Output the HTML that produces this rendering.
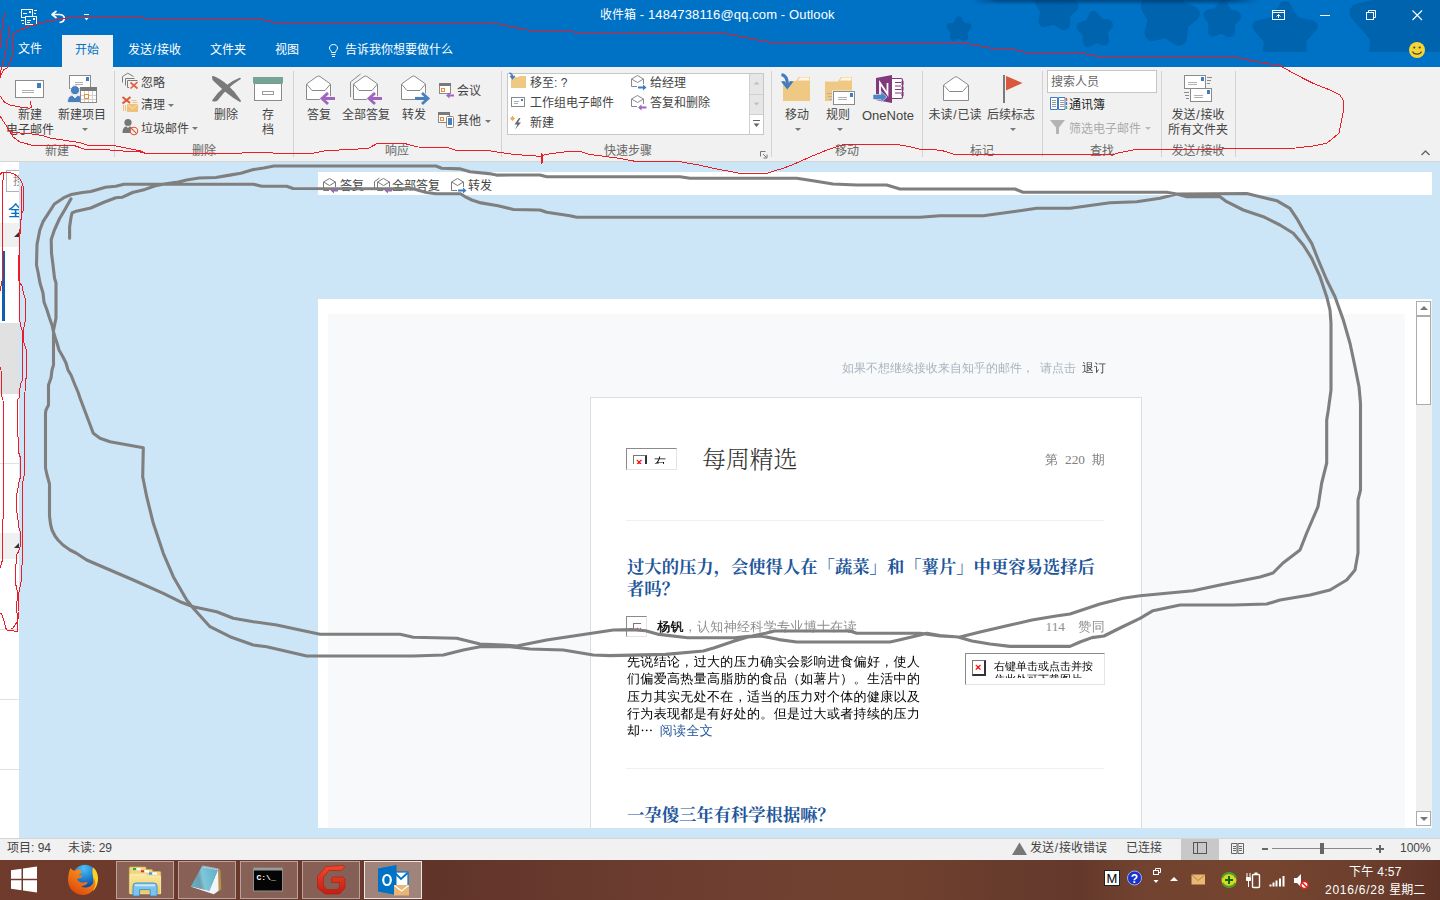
<!DOCTYPE html>
<html lang="zh-CN">
<head>
<meta charset="utf-8">
<title>收件箱 - 1484738116@qq.com - Outlook</title>
<style>
*{box-sizing:border-box;margin:0;padding:0}
html,body{width:1440px;height:900px;overflow:hidden;background:#cde6f7}
body{position:relative;font-family:"Liberation Sans","Noto Sans CJK SC",sans-serif;font-size:12px;color:#444;line-height:1}
.abs,.abs>*{position:absolute}
#titlebar{position:absolute;left:0;top:0;width:1440px;height:67px;background:#0072c6;overflow:hidden}
#ribbon{position:absolute;left:0;top:67px;width:1440px;height:95px;background:#f1f1f1;border-bottom:1px solid #d4d4d4}
#leftcol{position:absolute;left:0;top:162px;width:19px;height:676px;background:#fff;overflow:hidden}
#rphead{position:absolute;left:318px;top:172px;width:1114px;height:23px;background:#fff;overflow:hidden}
#msg{position:absolute;left:318px;top:299px;width:1114px;height:529px;background:#fff;overflow:hidden}
#status{position:absolute;left:0;top:838px;width:1440px;height:22px;background:#f1f1f1;border-top:1px solid #d4d4d4}
#taskbar{position:absolute;left:0;top:860px;width:1440px;height:40px;background:linear-gradient(90deg,#6e3b2d 0%,#6d3a2c 8%,#66372b 29%,#61342a 30%,#683a2e 40%,#6f4031 52%,#71412f 62%,#683c2d 69%,#64392c 75%,#71422f 79%,#75452f 88%,#6c3e2d 95%,#5e3327 100%);overflow:hidden}
#ink,#icons{position:absolute;left:0;top:0;width:1440px;height:900px;pointer-events:none}
.t{position:absolute;white-space:nowrap}
.sx{letter-spacing:0;padding:0 .8px}
#titlebar .tab{position:absolute;top:42px;font-size:12px;color:#fff;white-space:nowrap;line-height:16px}
#tabsel{position:absolute;left:62px;top:35px;width:51px;height:32px;background:#f1f1f1}
#ribbon .sep{position:absolute;top:4px;width:1px;height:86px;background:#d2d2d2}
#ribbon .gl{position:absolute;top:76px;font-size:12px;color:#666;white-space:nowrap;line-height:16px;transform:translateX(-50%)}
#ribbon .bl{position:absolute;font-size:12px;color:#444;white-space:nowrap;line-height:15px;text-align:center;transform:translateX(-50%)}
#ribbon .sl{position:absolute;font-size:12px;color:#444;white-space:nowrap;line-height:16px}
#ribbon .arr{position:absolute;width:0;height:0;border-left:3px solid transparent;border-right:3px solid transparent;border-top:3px solid #777}

#msg .em{position:absolute;white-space:nowrap;font-family:"Liberation Serif","Noto Serif CJK SC",serif}


#msg .bm{font-family:"Liberation Serif","WenQuanYi Zen Hei","Noto Serif CJK SC",serif}
#msg .bm13{font-size:13px !important;letter-spacing:.33px}
#msg .bm13 .n{font-size:13.33px;letter-spacing:0}
#msg .ph{position:absolute;border:1px solid #e4e4e4;border-top-color:#8a8a8a;border-left-color:#8a8a8a;background:#fff;overflow:hidden}
#msg .phc{position:absolute;overflow:hidden}
#msg .phi{position:absolute;width:14px;height:16px;border:1px solid #f0f0f0;border-top:1px solid #777;border-left:1px solid #777;border-right:2px solid #333;border-bottom:2px solid #333;background:#fff;font-family:"Liberation Sans",sans-serif}
#msg .phi span{position:absolute;left:2px;top:0px;font-size:11px;font-weight:bold;color:#f00;line-height:13px}
#status .st{position:absolute;top:1px;font-size:12px;color:#444;white-space:nowrap;line-height:16px}
#taskbar .tb{position:absolute;top:1px;width:58px;height:38px;background:rgba(255,255,255,.2);border:1px solid rgba(255,255,255,.42)}
#taskbar svg,#status svg,#rphead svg,#msg svg,#leftcol svg{position:absolute;overflow:visible}
#titlebar svg{position:absolute;overflow:hidden}

</style>
</head>
<body>
<div id="titlebar">
<svg id="stars" style="left:0;top:0" width="1440" height="52" viewBox="0 0 1440 52"><defs><linearGradient id="shd" x1="0" y1="0" x2="0" y2="1"><stop offset="0" stop-color="#003a6b" stop-opacity=".75"/><stop offset="1" stop-color="#003a6b" stop-opacity="0"/></linearGradient><linearGradient id="shm" x1="0" y1="0" x2="1" y2="0"><stop offset="0" stop-color="#fff" stop-opacity="0"/><stop offset=".1" stop-color="#fff"/><stop offset=".9" stop-color="#fff"/><stop offset="1" stop-color="#fff" stop-opacity="0"/></linearGradient><mask id="shmask"><rect x="970" y="0" width="290" height="6" fill="url(#shm)"/></mask></defs>
<g fill="#0063ad" stroke="#0063ad" stroke-linejoin="round">
<path d="M959.0 20.0 L962.1 25.2 L968.0 26.6 L964.1 31.1 L964.6 37.2 L959.0 34.8 L953.4 37.2 L953.9 31.1 L950.0 26.6 L955.9 25.2Z" stroke-width="7.0"/>
<path d="M1058.4 -7.8 L1062.6 2.2 L1072.7 6.0 L1064.6 13.2 L1064.0 24.0 L1054.7 18.4 L1044.2 21.2 L1046.6 10.7 L1040.7 1.5 L1051.5 0.6Z" stroke-width="12"/>
<path d="M1093.8 16.1 L1099.0 23.3 L1107.9 24.5 L1102.6 31.8 L1104.2 40.6 L1095.7 37.8 L1087.8 42.0 L1087.8 33.1 L1081.4 26.9 L1089.9 24.1Z" stroke-width="10"/>
<path d="M1173.0 -5.7 L1178.3 8.1 L1191.8 13.8 L1180.4 23.0 L1179.1 37.7 L1166.8 29.7 L1152.5 33.0 L1156.2 18.8 L1148.7 6.2 L1163.4 5.4Z" stroke-width="16"/>
<path d="M1222.7 6.0 L1226.9 13.9 L1235.5 16.4 L1229.3 22.8 L1229.6 31.7 L1221.6 27.8 L1213.2 30.9 L1214.4 22.0 L1208.9 15.0 L1217.7 13.4Z" stroke-width="11.0"/>
<path d="M1285.0 7.0 L1294.2 22.3 L1311.6 26.3 L1299.9 39.8 L1301.5 57.7 L1285.0 50.7 L1268.5 57.7 L1270.1 39.8 L1258.4 26.3 L1275.8 22.3Z" stroke-width="12"/>
<path d="M1406.0 -22.0 L1422.5 5.3 L1453.6 12.5 L1432.6 36.7 L1435.4 68.5 L1406.0 56.0 L1376.6 68.5 L1379.4 36.7 L1358.4 12.5 L1389.5 5.3Z" stroke-width="18"/>
</g>
<rect x="970" y="0" width="290" height="5" fill="url(#shd)" mask="url(#shmask)"/>
</svg>
<div id="tabsel"></div>
<div class="t" id="wtitle" style="left:600px;top:6px;font-size:13px;color:#fff;line-height:17px;letter-spacing:.12px"><span style="font-size:12px;letter-spacing:0">收件箱</span> - 1484738116@qq.com - Outlook</div>
<div class="tab" style="left:18px;top:41px">文件</div>
<div class="tab" style="left:75px;color:#0072c6">开始</div>
<div class="tab" style="left:128px">发送<span class="sx">/</span>接收</div>
<div class="tab" style="left:210px">文件夹</div>
<div class="tab" style="left:275px">视图</div>
<div class="tab" style="left:345px">告诉我你想要做什么</div>
</div>
<div id="ribbon">
<div class="sep" style="left:114px"></div>
<div class="sep" style="left:293px"></div>
<div class="sep" style="left:501px"></div>
<div class="sep" style="left:771px"></div>
<div class="sep" style="left:922px"></div>
<div class="sep" style="left:1042px"></div>
<div class="sep" style="left:1161px"></div>
<div class="sep" style="left:1235px"></div>
<div class="gl" style="left:57px">新建</div>
<div class="gl" style="left:204px">删除</div>
<div class="gl" style="left:397px">响应</div>
<div class="gl" style="left:628px">快速步骤</div>
<div class="gl" style="left:847px">移动</div>
<div class="gl" style="left:982px">标记</div>
<div class="gl" style="left:1102px">查找</div>
<div class="gl" style="left:1198px">发送<span class="sx">/</span>接收</div>

<div class="bl" style="left:30px;top:41px">新建<br>电子邮件</div>
<div class="bl" style="left:82px;top:41px">新建项目</div>
<div class="arr" style="left:82px;top:61px"></div>

<div class="sl" style="left:141px;top:8px">忽略</div>
<div class="sl" style="left:141px;top:30px">清理</div>
<div class="arr" style="left:168px;top:37px"></div>
<div class="sl" style="left:141px;top:54px">垃圾邮件</div>
<div class="arr" style="left:192px;top:60px"></div>
<div class="bl" style="left:226px;top:41px">删除</div>
<div class="bl" style="left:268px;top:41px">存<br>档</div>

<div class="bl" style="left:319px;top:41px">答复</div>
<div class="bl" style="left:366px;top:41px">全部答复</div>
<div class="bl" style="left:414px;top:41px">转发</div>
<div class="sl" style="left:457px;top:16px">会议</div>
<div class="sl" style="left:457px;top:46px">其他</div>
<div class="arr" style="left:485px;top:53px"></div>

<div id="qs" style="position:absolute;left:507px;top:6px;width:257px;height:62px;background:#fff;border:1px solid #c6c6c6"></div>
<div style="position:absolute;left:749px;top:7px;width:14px;height:40px;background:#e6e6e6;border-left:1px solid #d0d0d0"></div>
<div style="position:absolute;left:749px;top:27px;width:14px;height:1px;background:#d0d0d0"></div>
<div style="position:absolute;left:749px;top:47px;width:14px;height:1px;background:#d0d0d0"></div>
<div style="position:absolute;left:749px;top:47px;width:1px;height:20px;background:#d0d0d0"></div>
<div class="sl" style="left:530px;top:8px">移至: ?</div>
<div class="sl" style="left:530px;top:28px">工作组电子邮件</div>
<div class="sl" style="left:530px;top:48px">新建</div>
<div class="sl" style="left:650px;top:8px">给经理</div>
<div class="sl" style="left:650px;top:28px">答复和删除</div>

<div class="bl" style="left:797px;top:41px">移动</div>
<div class="arr" style="left:795px;top:61px"></div>
<div class="bl" style="left:838px;top:41px">规则</div>
<div class="arr" style="left:837px;top:61px"></div>
<div class="bl" style="left:888px;top:41px;font-size:13px">OneNote</div>
<div class="bl" style="left:955px;top:41px">未读<span class="sx">/</span>已读</div>
<div class="bl" style="left:1011px;top:41px">后续标志</div>
<div class="arr" style="left:1010px;top:61px"></div>

<div style="position:absolute;left:1047px;top:3px;width:110px;height:23px;background:#fff;border:1px solid #c6c6c6"></div>
<div class="sl" style="left:1051px;top:7px;color:#666">搜索人员</div>
<div class="sl" style="left:1069px;top:30px;color:#222">通讯簿</div>
<div class="sl" style="left:1069px;top:54px;color:#ababab">筛选电子邮件</div>
<div class="arr" style="left:1145px;top:60px;border-top-color:#bbb"></div>
<div class="bl" style="left:1198px;top:41px">发送<span class="sx">/</span>接收<br>所有文件夹</div>
</div>
<div id="leftcol">
<div style="position:absolute;left:6px;top:8px;width:20px;height:22px;border:1px solid #abb3bc;background:#fff"></div>
<div class="t" style="left:13px;top:11px;font-size:12px;color:#8a8a8a;line-height:16px">搜索</div>
<div class="t" style="left:8px;top:40px;font-size:15px;color:#0072c6;line-height:18px;font-weight:500">全部</div>
<div style="position:absolute;left:0;top:61px;width:19px;height:24px;background:#f0f0f0"></div>
<div style="position:absolute;left:14px;top:70px;width:0;height:0;border-left:5px solid transparent;border-bottom:5px solid #333"></div>
<div style="position:absolute;left:2px;top:89px;width:3px;height:70px;background:#0f5fae"></div>
<div style="position:absolute;left:0;top:161px;width:19px;height:71px;background:#e1e1e1"></div>
<div style="position:absolute;left:0;top:301px;width:19px;height:1px;background:#e1e1e1"></div>
<div style="position:absolute;left:0;top:371px;width:19px;height:26px;background:#f0f0f0"></div>
<div style="position:absolute;left:14px;top:381px;width:0;height:0;border-left:5px solid transparent;border-bottom:5px solid #333"></div>
<div style="position:absolute;left:0;top:467px;width:19px;height:1px;background:#e1e1e1"></div>
<div style="position:absolute;left:0;top:537px;width:19px;height:1px;background:#e1e1e1"></div>
<div style="position:absolute;left:0;top:607px;width:19px;height:1px;background:#e1e1e1"></div>
</div>
<div id="rphead">
<div class="t" style="left:22px;top:6px;font-size:12px;color:#444;line-height:16px">答复</div>
<div class="t" style="left:74px;top:6px;font-size:12px;color:#444;line-height:16px">全部答复</div>
<div class="t" style="left:150px;top:6px;font-size:12px;color:#444;line-height:16px">转发</div>
</div>
<div id="msg">
<div style="position:absolute;left:10px;top:15px;width:1077px;height:520px;background:#f7f9fa"></div>
<div style="position:absolute;left:272px;top:98px;width:552px;height:440px;background:#fff;border:1px solid #ddd"></div>
<div class="em bm" style="left:524px;top:61px;font-size:12px;color:#a9b4c0;line-height:16px;word-spacing:3px">如果不想继续接收来自知乎的邮件， 请点击 <span style="color:#444">退订</span></div>
<div class="ph" style="left:308px;top:149px;width:51px;height:22px">
 <div class="phc" style="left:6px;top:6px;width:38px;height:9px">
  <div class="phi" style="left:0;top:0"><span>×</span></div>
  <div class="em bm" style="left:21px;top:0px;font-size:12px;color:#000;line-height:14px;white-space:normal;width:12px">右键单击</div>
 </div>
</div>
<div class="em" style="left:384px;top:145px;font-size:24px;color:#333;line-height:32px;letter-spacing:-.2px;font-weight:300">每周精选</div>
<div class="em bm bm13" style="right:327px;top:153px;color:#808080;line-height:16px;word-spacing:3.1px">第 <span class="n">220</span> 期</div>
<div style="position:absolute;left:308px;top:221px;width:478px;height:1px;background:#eaf0f4"></div>
<div class="em" style="left:309px;top:258px;font-size:17.33px;font-weight:700;color:#225599;line-height:22px;white-space:normal;width:480px">过大的压力，会使得人在「蔬菜」和「薯片」中更容易选择后者吗？</div>
<div class="ph" style="left:308px;top:317px;width:21px;height:21px">
 <div class="phc" style="left:6px;top:6px;width:8px;height:8px">
  <div class="phi" style="left:0;top:0"><span>×</span></div>
 </div>
</div>
<div class="em bm bm13" style="left:339px;top:320px;color:#8f8f8f;line-height:16px"><b style="color:#111;text-shadow:.5px 0 0 #111">杨钒</b>，认知神经科学专业博士在读</div>
<div class="em bm bm13" style="right:327px;top:320px;color:#8f8f8f;line-height:16px;word-spacing:3.1px"><span class="n">114</span>&nbsp; 赞同</div>
<div class="em bm bm13" style="left:309px;top:354px;color:#000;line-height:17.3px;white-space:normal;width:298px">先说结论，过大的压力确实会影响进食偏好，使人们偏爱高热量高脂肪的食品（如薯片）。生活中的压力其实无处不在，适当的压力对个体的健康以及行为表现都是有好处的。但是过大或者持续的压力却<span style="font-family:'WenQuanYi Zen Hei','Noto Sans CJK SC',sans-serif">…</span> <span style="color:#225599;margin-left:2.5px">阅读全文</span></div>
<div class="ph" style="left:647px;top:354px;width:140px;height:32px">
 <div class="phc" style="left:6px;top:6px;width:127px;height:18px">
  <div class="phi" style="left:0;top:0"><span>×</span></div>
  <div class="em bm" style="left:22px;top:0;font-size:11px;color:#000;line-height:13px;white-space:normal;width:100px">右键单击或点击并按住此处可下载图片</div>
 </div>
</div>
<div style="position:absolute;left:308px;top:469px;width:478px;height:1px;background:#eaf0f4"></div>
<div class="em" style="left:309px;top:506px;font-size:17.33px;font-weight:700;color:#225599;line-height:22px">一孕傻三年有科学根据嘛？</div>
<div id="sb" style="position:absolute;left:1098px;top:2px;width:16px;height:525px;background:#f0f0f0"></div>
<div style="position:absolute;left:1098px;top:2px;width:15px;height:15px;background:#fff;border:1px solid #acacac"></div>
<div style="position:absolute;left:1098px;top:17px;width:15px;height:89px;background:#fff;border:1px solid #acacac"></div>
<div style="position:absolute;left:1098px;top:512px;width:15px;height:15px;background:#fff;border:1px solid #acacac"></div>
<div style="position:absolute;left:1102px;top:7px;width:0;height:0;border-left:4px solid transparent;border-right:4px solid transparent;border-bottom:4px solid #777"></div>
<div style="position:absolute;left:1102px;top:518px;width:0;height:0;border-left:4px solid transparent;border-right:4px solid transparent;border-top:4px solid #777"></div>
</div>
<div id="status">
<div class="st" style="left:7px">项目: 94</div>
<div class="st" style="left:68px">未读: 29</div>
<div class="st" style="left:1030px">发送<span class="sx">/</span>接收错误</div>
<div class="st" style="left:1126px">已连接</div>
<div style="position:absolute;left:1181px;top:0;width:38px;height:21px;background:#c8c8c8"></div>
<div style="position:absolute;left:1272px;top:9px;width:100px;height:1px;background:#888"></div>
<div style="position:absolute;left:1320px;top:4px;width:4px;height:11px;background:#666"></div>
<div style="position:absolute;left:1262px;top:9px;width:6px;height:2px;background:#666"></div>
<div style="position:absolute;left:1376px;top:9px;width:8px;height:2px;background:#666"></div><div style="position:absolute;left:1379px;top:6px;width:2px;height:8px;background:#666"></div>
<div class="st" style="left:1400px">100%</div>
</div>
<div id="taskbar">
<div class="tb" style="left:116px"></div>
<div class="tb" style="left:178px"></div>
<div class="tb" style="left:240px"></div>
<div class="tb" style="left:302px"></div>
<div class="tb" style="left:364px;background:rgba(255,255,255,.38);border-color:rgba(255,255,255,.8)"></div>
<div class="t" style="left:1349px;top:4px;font-size:12px;color:#fff;line-height:16px;letter-spacing:.3px">下午 4:57</div>
<div class="t" style="left:1325px;top:22px;font-size:12px;color:#fff;line-height:16px"><span style="letter-spacing:.75px">2016/6/28 </span>星期二</div>
</div>
<svg id="icons" viewBox="0 0 1440 900" width="1440" height="900">
<g fill="none" stroke="#fff" stroke-width="1">
  <rect x="21.5" y="9.5" width="11" height="8" fill="#0072c6"/>
  <rect x="25.5" y="16.5" width="11" height="8" fill="#0072c6"/>
  <path d="M23 13.5h4M27 20.5h4M27 22.5h3M34 10.5h3M34 13.5h2M21 20.5h3M22 23.5h2"/>
  <rect x="29" y="11" width="2" height="2" fill="#fff" stroke="none"/>
  <rect x="33" y="18" width="2" height="2" fill="#fff" stroke="none"/>
</g>
<path d="M56.5 11 L52 14.5 L56.5 18 M52.5 14.5 H59 C66 14.5 66 22 59.5 22.5" fill="none" stroke="#fff" stroke-width="1.6" stroke-linejoin="round"/>
<path d="M84 14.5h5" stroke="#fff" stroke-width="1" fill="none"/>
<path d="M84.5 18h4l-2 2.5z" fill="#fff"/>

<g fill="none" stroke="#fff" stroke-width="1">
  <path d="M331.5 52.5 C331.5 50.5 329.5 50 329.5 48 C329.5 45.800000000000004 331.3 44.5 333.5 44.5 C335.7 44.5 337.5 45.8 337.5 48 C337.5 50 335.5 50.5 335.5 52.5 Z"/>
  <path d="M331.5 54.5h4M332 56.5h3"/>
</g>

<g fill="none" stroke="#fff" stroke-width="1">
  <rect x="1272.500" y="10.5" width="12" height="9"/>
  <path d="M1272.5 12.500h12M1278.500 18V14.500M1276.500 16.500l2-2 2 2"/>
  <path d="M1320 15.500h10"/>
  <rect x="1366.500" y="12.500" width="7" height="7"/>
  <path d="M1368.500 12.500v-2h7v7h-2"/>
  <path d="M1412.500 10.500l9.500 9.500M1422 10.500l-9.500 9.500" stroke-width="1.100"/>
</g>

<circle cx="1417" cy="50" r="8" fill="#f5d536"/>
<circle cx="1414.300" cy="47.500" r="1.100" fill="#4a4324"/>
<circle cx="1419.700" cy="47.500" r="1.100" fill="#4a4324"/>
<path d="M1412.500 51.500 C1414 55 1420 55 1421.500 51.500" fill="none" stroke="#4a4324" stroke-width="1.100"/>


<rect x="15.500" y="80.500" width="28" height="17" fill="#fff" stroke="#8a8a8a"/>
<rect x="37" y="83" width="4" height="5" fill="#3f7cc4"/>
<path d="M22 90.500h12M22 92.500h12" stroke="#b0b0b0" fill="none"/>

<rect x="69.500" y="75.500" width="21" height="13" fill="#fff" stroke="#8a8a8a"/>
<rect x="86" y="77" width="3" height="4" fill="#3f7cc4"/>
<path d="M75 82.500h8M75 84.500h8" stroke="#b0b0b0" fill="none"/>
<circle cx="75" cy="90.200" r="4.600" fill="#4a7fbd" stroke="#f1f1f1" stroke-width="1"/>
<path d="M67.500 102.500 C67.500 97 70 95.500 72.500 95.500 L75 98 L77.500 95.500 C80 95.500 82.500 97 82.500 102.500 Z" fill="#4a7fbd" stroke="#f1f1f1" stroke-width=".8"/>
<rect x="80" y="87" width="17" height="16" fill="#fff" stroke="none"/>
<rect x="80.500" y="87.500" width="16" height="15" fill="#fff" stroke="#8a8a8a"/>
<rect x="80" y="87" width="17" height="4" fill="#7a7a7a"/>
<path d="M81 95.500h15M81 99.500h15M84.500 91v11M88.500 91v11M92.500 91v11" stroke="#d0d0d0" fill="none"/>
<rect x="84.500" y="94.500" width="4" height="4" fill="#fff" stroke="#ec8a2f" stroke-width="1"/>

<g fill="none" stroke="#7d7d7d" stroke-width="1">
  <path d="M122.500 82.500 V76.500 L127.800 73.200 L133.500 76.500"/>
  <path d="M125.500 85.500 V78.500 H134.500"/>
  <path d="M127.500 87.500 V80.500 H137.500 M127.500 87.500 H129"/>
</g>
<path d="M130.500 82.500 L137.500 88.500 M137.500 82 L130.500 88.500" stroke="#e0603f" stroke-width="1.700" fill="none"/>

<path d="M122.500 97 L130 103 M130.500 97 L122.500 103.500" stroke="#dd5a38" stroke-width="2.100" fill="none"/>
<path d="M123.500 105v6M125.500 105v6" stroke="#efc27c" fill="none"/>
<path d="M131.500 100.500h5M132.500 102.500h5" stroke="#efc27c" fill="none"/>
<rect x="127" y="104" width="11" height="8" fill="#efc27c"/>
<path d="M127.500 104.500l5 4 5-4" stroke="#f8e3bd" stroke-width="1" fill="none"/>

<circle cx="128" cy="122.500" r="3.600" fill="#777"/>
<path d="M122.500 133 C122.500 128.500 124.500 126.500 126.500 126.500 L128 128 L129.500 126.500 C130.500 126.500 131.500 127 132 127.500 L130 133 Z" fill="#777"/>
<circle cx="134" cy="131" r="3.700" fill="#f1f1f1" stroke="#dd5a38" stroke-width="1.100"/>
<path d="M131.400 128.400l5.200 5.200" stroke="#dd5a38" stroke-width="1.200"/>

<path d="M213 77 C222 80 233 90 240 101 C234 97.500 222 88 213.500 79.500 Z" fill="#7a7a7a" stroke="#7a7a7a" stroke-width="2" stroke-linejoin="round"/>
<path d="M240 78.500 C230 82 219 91 213 100.500 C215 101 216 101 217 100 C222 93 231 84 240 78.500 Z" fill="#7a7a7a" stroke="#7a7a7a" stroke-width="1.600" stroke-linejoin="round"/>

<rect x="254.500" y="83.500" width="27" height="17" fill="#fff" stroke="#8a8a8a"/>
<rect x="253" y="77" width="30" height="6.500" fill="#74a594"/>
<rect x="262.500" y="91.500" width="11" height="3" fill="#fff" stroke="#9a9a9a"/>

<g id="envopen">
<path d="M306.500 99.500 V84 L317 76.500 Q318.500 75.500 320 76.500 L330.500 84 V99.500 Z" fill="#fff" stroke="#8a8a8a"/>
<path d="M306.500 84 L312 90.500 H325 L330.500 84" fill="none" stroke="#8a8a8a"/>
</g>
<path d="M328 93 L322 98.500 L328 104 M322.500 98.500 H335" fill="none" stroke="#f1f1f1" stroke-width="4.400"/><path d="M328 93 L322 98.500 L328 104 M322.500 98.500 H335" fill="none" stroke="#a066bf" stroke-width="2.800"/>

<path d="M350.500 97 V82 L360.500 74" fill="none" stroke="#8a8a8a"/>
<path d="M353.500 99.500 V84 L364 76.500 Q365.500 75.500 367 76.500 L377.500 84 V99.500 Z" fill="#fff" stroke="#8a8a8a"/>
<path d="M353.500 84 L359 90.500 H372 L377.500 84" fill="none" stroke="#8a8a8a"/>
<path d="M375 93 L369 98.500 L375 104 M369.500 98.500 H382" fill="none" stroke="#f1f1f1" stroke-width="4.400"/><path d="M375 93 L369 98.500 L375 104 M369.500 98.500 H382" fill="none" stroke="#a066bf" stroke-width="2.800"/>

<path d="M401.500 99.500 V84 L412 76.500 Q413.500 75.500 415 76.500 L425.500 84 V99.500 Z" fill="#fff" stroke="#8a8a8a"/>
<path d="M401.500 84 L407 90.500 H420 L425.500 84" fill="none" stroke="#8a8a8a"/>
<path d="M422 93 L428 98.500 L422 104 M427.500 98.500 H415" fill="none" stroke="#f1f1f1" stroke-width="4.400"/><path d="M422 93 L428 98.500 L422 104 M427.500 98.500 H415" fill="none" stroke="#4a7fbd" stroke-width="2.800"/>

<rect x="439.500" y="83.500" width="11" height="10" fill="#fff" stroke="#8a8a8a"/>
<rect x="439" y="83" width="12" height="3" fill="#7a7a7a"/>
<rect x="441.500" y="88.500" width="3" height="3" fill="#fff" stroke="#ec8a2f"/>
<path d="M446 95.500 L449.500 92.500 V94.500 H454 V96.500 H449.500 V98.500 Z" fill="#a066bf"/>

<rect x="438.500" y="112.500" width="11" height="10" fill="#fff" stroke="#8a8a8a"/>
<rect x="438" y="112" width="12" height="3" fill="#7a7a7a"/>
<rect x="440.500" y="117.500" width="3" height="3" fill="#fff" stroke="#ec8a2f"/>
<rect x="446.500" y="116.500" width="7" height="11" rx="1" fill="#fff" stroke="#8a8a8a"/>
<rect x="448" y="118" width="4" height="7" fill="#4a7fbd"/>

<path d="M511 77 H518 L520 76 H526 V88 H511 Z" fill="#efc983"/>
<path d="M509.500 73 C511.500 73.500 512.500 75 512.500 77 M510.300 75.800 L512.500 78.500 L514.700 75.800" fill="none" stroke="#3f7cc4" stroke-width="1.500"/>

<rect x="511.500" y="97.500" width="13" height="9" fill="#fff" stroke="#8a8a8a"/>
<rect x="521" y="99" width="2" height="2" fill="#3f7cc4"/>
<path d="M514 101.500h5M514 103.500h4" stroke="#b0b0b0" fill="none"/>

<path d="M519 118 L514.500 124.500 H517.500 L515 129.500 L521 122.500 H518 L520.500 118 Z" fill="#666"/>
<path d="M510 118.500h5M512.500 116v5M510.800 116.800l3.400 3.400M514.200 116.800l-3.400 3.400" stroke="#f0a030" stroke-width=".8" fill="none"/>
<g transform="translate(0,-1)">
<path d="M631.500 87.500 V80 L637.500 76.500 L643.500 80 V85" fill="none" stroke="#8a8a8a"/>
<path d="M631.500 80 L637.500 83.500 L643.500 80 M631.500 87.500 H637" fill="none" stroke="#8a8a8a"/>
<path d="M646.500 88.500 L643 85.500 V87.500 H638 V89.500 H643 V91.500 Z" fill="#3f7cc4"/>

<path d="M631.500 107.500 V100 L637.500 96.500 L643.500 100 V105" fill="none" stroke="#8a8a8a"/>
<path d="M631.500 100 L637.500 103.500 L643.500 100 M631.500 107.500 H637" fill="none" stroke="#8a8a8a"/>
<path d="M638 108.500 L641.500 105.500 V107.500 H646.500 V109.500 H641.500 V111.500 Z" fill="#a066bf"/>
</g>

<path d="M753.500 84.500h6l-3-3z" fill="#c0c0c0"/>
<path d="M753.500 102.500h6l-3 3z" fill="#c0c0c0"/>
<path d="M753 120.500h7" stroke="#666" fill="none"/>
<path d="M753.500 123.500h6l-3 3.500z" fill="#666"/>

<path d="M760.500 156.500 V151.500 H765.500" fill="none" stroke="#777"/>
<path d="M763 154l3.500 3.500M767 154.500V158H763.500" fill="none" stroke="#777"/>

<path d="M783 81 H796 L799 77 H808.500 C809.500 77 810 77.500 810 78.500 V101 H783 Z" fill="#efc983"/>
<path d="M800 77.600 H808 C808.800 77.600 809.300 78.200 809.300 79 V80.600 H797.700 Z" fill="#fff7e6"/>
<path d="M781.500 74.500 C785.500 75.500 787.300 79 787.300 84" fill="none" stroke="#3f7cc4" stroke-width="3"/><path d="M781 81.500 L784 81 L787.300 84.500 L790.500 81 L793.500 81.500 L787.300 89.500 Z" fill="#3f7cc4"/>

<path d="M825 81.500 H838 L841 77 H850.500 C851.500 77 852 77.500 852 78.500 V101 H825 Z" fill="#efc983"/>
<path d="M842 77.600 H850 C850.800 77.600 851.300 78.200 851.300 79 V80.600 H839.700 Z" fill="#fff7e6"/>
<rect x="832" y="90.500" width="24" height="15" fill="#f1f1f1"/>
<rect x="833.500" y="91.500" width="21" height="13" fill="#fff" stroke="#8a8a8a"/>
<rect x="850" y="93" width="3" height="4" fill="#3f7cc4"/>
<path d="M838 97.500h9M838 99.500h9M827 93.500h5M828 96.500h4M829 99.500h3" stroke="#b0b0b0" fill="none"/>

<rect x="888" y="78.500" width="14.500" height="20" rx="1.500" fill="#fff" stroke="#80397b" stroke-width="1.200"/>
<path d="M895 82.500h6M895 86h6M895 89.500h6M895 93h6" stroke="#80397b" stroke-width="1" fill="none"/>
<path d="M902.500 81v4M902.500 86.500v4M902.500 92v4" stroke="#80397b" stroke-width="2" fill="none"/>
<path d="M876 78 L892 75 V103 L876 100 Z" fill="#80397b"/>
<path d="M880 94 V83 L887.500 94 V83" fill="none" stroke="#fff" stroke-width="1.800"/>
<path d="M887 97 L881 91.500 V94.500 H873 V99.500 H881 V102.500 Z" fill="#4a86c8" stroke="#f1f1f1" stroke-width=".6"/>

<path d="M943.500 100.500 V85 L954.500 77.300 Q956 76.300 957.500 77.300 L968.500 85 V100.500 Z" fill="#fff" stroke="#8a8a8a"/>
<path d="M943.500 85 L949.500 91.500 H962.500 L968.500 85" fill="none" stroke="#8a8a8a"/>

<path d="M1004 75 V103" stroke="#7a7a7a" stroke-width="2" fill="none"/>
<path d="M1006 76 L1022.500 83 L1006 90.500 Z" fill="#d9593c"/>

<path d="M1050.500 97.500 H1057.500 V109.500 H1050.500 Z M1058.500 97.500 H1065 V109.500 H1058.500 Z" fill="#fff" stroke="#3f7cc4"/>
<path d="M1052 100.500h4M1052 102.500h4M1052 104.500h4M1052 106.500h4M1060 100.500h4M1060 102.500h4M1060 104.500h4M1060 106.500h4" stroke="#999" fill="none"/>
<path d="M1066.500 98v3" stroke="#d9593c" stroke-width="1.400"/>
<path d="M1066.500 102v3" stroke="#3f7cc4" stroke-width="1.400"/>
<path d="M1066.500 106v3" stroke="#5aa469" stroke-width="1.400"/>

<path d="M1050 120 H1065 L1059 127.500 V134 H1056 V127.500 Z" fill="#b4b4b4"/>

<rect x="1184.500" y="75.500" width="21" height="13" fill="#fff" stroke="#8a8a8a"/>
<rect x="1201" y="77" width="3" height="4" fill="#3f7cc4"/>
<path d="M1188 82.500h9M1188 84.500h9" stroke="#b0b0b0" fill="none"/>
<path d="M1207 77.500h5M1207 80.500h4M1207 83.500h3" stroke="#8a8a8a" fill="none"/>
<rect x="1190.500" y="88.500" width="21" height="13" fill="#fff" stroke="#8a8a8a"/>
<rect x="1207" y="90" width="3" height="4" fill="#3f7cc4"/>
<path d="M1194 95.500h9M1194 97.500h9" stroke="#b0b0b0" fill="none"/>
<path d="M1184 92.500h5M1185 95.500h4M1186 98.500h3" stroke="#8a8a8a" fill="none"/>

<path d="M1421.500 155 L1425.500 151 L1429.500 155" fill="none" stroke="#666" stroke-width="1.400"/>

<defs>
<radialGradient id="ffg" cx="0.45" cy="0.15" r="0.9"><stop offset="0" stop-color="#4fc0f5"/><stop offset=".5" stop-color="#1f7fd0"/><stop offset="1" stop-color="#0b2f8a"/></radialGradient>
<linearGradient id="ffo" x1="0.8" y1="0" x2="0.2" y2="1"><stop offset="0" stop-color="#f9a01e"/><stop offset=".5" stop-color="#ee7414"/><stop offset="1" stop-color="#d8420e"/></linearGradient>
<linearGradient id="npg" x1="0" y1="0.6" x2="1" y2="0.4"><stop offset="0" stop-color="#58b4cc"/><stop offset=".3" stop-color="#6e9fae"/><stop offset=".45" stop-color="#7fc6d9"/><stop offset="1" stop-color="#5cb2cb"/></linearGradient>
<linearGradient id="fold" x1="0" y1="0" x2="0" y2="1"><stop offset="0" stop-color="#fbe9a3"/><stop offset="1" stop-color="#edc95c"/></linearGradient>
<linearGradient id="redg" x1="0" y1="0" x2="0" y2="1"><stop offset="0" stop-color="#f04a2a"/><stop offset="1" stop-color="#c41d12"/></linearGradient>
</defs>

<path d="M11 870.300 L21.500 868.800 V878.800 H11 Z M23 868.600 L37 866.600 V878.800 H23 Z M11 880.200 H21.500 V890.200 L11 888.700 Z M23 880.200 H37 V892.400 L23 890.400 Z" fill="#fff"/>

<circle cx="85" cy="877" r="12.300" fill="url(#ffg)"/>
<path d="M93 867.500 C96.500 870 98.300 874.500 98 880 C97.500 885 95.500 888.500 93 891 C93.800 886.500 94 881 93 876.500 C92.500 873 92 870 93 867.500 Z" fill="#ffd21e"/>
<path d="M70.500 868 C71.500 869.500 73 870.500 74.500 870.800 C76 869.800 78 869.500 79.800 869.600 C80.200 870.500 81 871.800 82.200 872.800 C80.500 873 79.200 874 78.800 875.200 C80 875.500 81.500 875.500 82.500 875.200 C82.200 876.800 81 878 79.500 878.200 C78.500 878.300 77.500 878.600 77 879.200 C78.200 881.500 81 883 84 882.600 C85.500 882.400 86.800 882 87.800 882.600 C86.500 884.600 84 886 81 886.200 C84.500 888.300 89.500 887.800 92.200 884.500 C93.500 882.800 94.200 880.500 94 878.200 C95.200 880 95.800 882.500 95.300 885.500 C94 891 89 895 83 895 C74.700 895 68 888.300 68 880 C68 876 69 871.500 70.500 868 Z" fill="url(#ffo)"/>

<path d="M129.500 868 Q129.500 867 130.500 867 H145 Q146 867 146 868 V869.500 H151.500 Q152.500 869.500 152.500 870.500 V871.500 H159.500 Q160.800 871.500 160.800 872.800 V893.500 H129.300 V868 Z" fill="#eed680" stroke="#d9b94e" stroke-width=".6"/>
<rect x="133" y="868" width="7.500" height="2.200" fill="#fff"/><rect x="133" y="868" width="3.200" height="2.200" fill="#1fb32e"/>
<rect x="141" y="870.200" width="8" height="2.200" fill="#fff"/><rect x="141" y="870.200" width="3.200" height="2.200" fill="#d7382c"/>
<rect x="149" y="872.400" width="8" height="2.200" fill="#fff"/><rect x="149" y="872.400" width="3.200" height="2.200" fill="#2a8cea"/>
<path d="M130 874.200 H145.500 L147.500 876.200 H160.500 V893.800 H130 Z" fill="url(#fold)" stroke="#fbf3c8" stroke-width=".6"/>
<path d="M133 896 V886 Q133 883 136 883 H154 Q157 883 157 886 V896 H150.200 V889.600 H139.600 V896 Z" fill="#7cc3ee" stroke="#2f86cf" stroke-width=".8"/>
<path d="M135 885.300 H155" stroke="#c9e8fb" stroke-width="2"/>

<path d="M218.700 869 L220.500 870 L221.300 889.800 L218.700 890.700 Z" fill="#b8923a"/>
<path d="M218.200 868.900 L218.700 890.700 L213.800 894.200 L191.100 886.800 L191.100 886.200 L209.300 890.500 Z" fill="#f2f5f7"/>
<path d="M202.200 865.800 L218.200 868.900 L209.300 891.100 L191.100 886.200 Z" fill="url(#npg)"/>
<path d="M202.600 866.300 L218.200 869.400" stroke="#d7dee2" stroke-width="1.800"/>
<path d="M202.600 866 L218.200 869" stroke="#6c7b84" stroke-width="1.400" stroke-dasharray="1 1"/>

<rect x="253.500" y="868" width="29" height="23" fill="#050505" stroke="#8e8e8e" stroke-width="1"/>
<rect x="254" y="868" width="28" height="2.500" fill="#9a9a9a"/>
<text x="256.500" y="880" font-family="Liberation Mono, monospace" font-size="8" font-weight="bold" fill="#fff">C:\_</text>

<path d="M343 865.500 C344.500 865.500 344.500 867 344 868 L341.500 870.500 H329 L323.500 877 V886 L327 889.500 H337.500 L339.500 887 V882.500 H331.500 V878.500 L333 877 H343 L345 879 V888 L339.500 894 H325 L317.500 888 V876 L326 866.500 Z" fill="url(#redg)" stroke="#b01810" stroke-width=".6" stroke-linejoin="round"/>

<rect x="394" y="872" width="14" height="15" fill="#fff" stroke="#0072c6" stroke-width="1.200"/>
<path d="M395 873 L401 879 L407.500 873" fill="none" stroke="#0072c6" stroke-width="1.800"/>
<path d="M378 868.500 L396.500 865 V895 L378 891.500 Z" fill="#0072c6"/>
<ellipse cx="387" cy="880" rx="3.800" ry="5" fill="none" stroke="#fff" stroke-width="2.200"/>
<rect x="394" y="885" width="15" height="10.500" fill="#eab676"/>
<path d="M394.500 885.500 L401.500 891 L408.500 885.500" fill="none" stroke="#fff" stroke-width="1.200"/>

<rect x="1104.500" y="870.500" width="15" height="15" fill="#fff" stroke="#222" stroke-width="1"/>
<text x="1112" y="883" font-family="Liberation Sans, sans-serif" font-size="13" fill="#000" text-anchor="middle">M</text>
<circle cx="1134.500" cy="878" r="7" fill="#1a32c8" stroke="#9fb0e8" stroke-width="1"/>
<text x="1134.500" y="882.500" font-family="Liberation Sans, sans-serif" font-size="12" font-weight="bold" fill="#fff" text-anchor="middle">?</text>
<rect x="1153.500" y="870.500" width="5" height="4" fill="none" stroke="#fff" stroke-width="1"/><path d="M1155.500 870.500v-2h5v4h-2" fill="none" stroke="#fff"/>
<path d="M1153.500 880h5l-2.500 3z" fill="#fff"/>
<path d="M1170 881h8l-4-4z" fill="#fff"/>
<g transform="translate(0,2.5)"><rect x="1191.500" y="872" width="13.500" height="10" fill="#e9b872"/>
<path d="M1192 872.500 L1198.200 878 L1204.500 872.500" fill="none" stroke="#b98642" stroke-width="1"/></g>
<g transform="translate(0,2)"><circle cx="1229" cy="878" r="7.500" fill="#d8d820"/>
<path d="M1222 876 A7.500 7.500 0 0 1 1236 876" fill="none" stroke="#4aa02c" stroke-width="2"/>
<path d="M1222.500 881 A7.500 7.500 0 0 0 1235.500 881" fill="none" stroke="#4aa02c" stroke-width="2"/>
<path d="M1225 878h8M1229 874v8" stroke="#0a6a14" stroke-width="2"/></g>
<g transform="translate(0,2)"><rect x="1252.500" y="872.500" width="7" height="13" rx="1" fill="none" stroke="#fff" stroke-width="1.400"/>
<rect x="1254.500" y="870.500" width="3" height="2" fill="#fff"/>
<path d="M1247 871v4M1250 871v4M1246.500 875.500h4v3h-4zM1248.500 878v7" stroke="#fff" stroke-width="1" fill="#fff"/></g>
<path d="M1270.500 886.500v-2M1273.500 886.500v-4M1276.500 886.500v-6M1280 886.500v-8M1283.500 886.500v-10.500" stroke="#fff" stroke-width="2" fill="none"/>
<g transform="translate(0,2.5)"><path d="M1294 875.500h3l4-4v13l-4-4h-3z" fill="#fff"/>
<circle cx="1304.500" cy="882.500" r="3.600" fill="#fff" stroke="#e0201c" stroke-width="1.600"/>
<path d="M1302 880l5 5" stroke="#e0201c" stroke-width="1.600"/></g>

<path d="M1012 855 L1019.500 842.500 L1027 855 Z" fill="#777"/>
<rect x="1193.500" y="842.500" width="13" height="11" fill="none" stroke="#555"/>
<path d="M1197.500 843v10" stroke="#555" fill="none"/>
<path d="M1231.500 843.500 H1237 V853.500 H1231.500 Z M1238 843.500 H1243.500 V853.500 H1238 Z" fill="none" stroke="#666"/>
<path d="M1233 846.500h3M1233 848.500h3M1233 850.500h3M1239 846.500h3M1239 848.500h3M1239 850.500h3" stroke="#666" fill="none"/>

<g fill="none" stroke="#7a7a7a" stroke-width="1">
<path d="M323.500 190.500 V182 L329.500 178.500 L335.500 182 V187 M323.500 182 L329.500 185.500 L335.500 182 M323.500 190.500 H329"/>
<path d="M374.500 188 V181.500 L379.500 178 M377.500 190.500 V182 L383.500 178.500 L389.500 182 V187 M377.500 182 L383.500 185.500 L389.500 182 M377.500 190.500 H383"/>
<path d="M451.500 190.500 V182 L457.500 178.500 L463.500 182 V187 M451.500 182 L457.500 185.500 L463.500 182 M451.500 190.500 H457"/>
</g>
<path d="M330.500 190.500 L334 187.500 V189.500 H338 V191.500 H334 V193.500 Z" fill="#a066bf"/>
<path d="M384.500 190.500 L388 187.500 V189.500 H392 V191.500 H388 V193.500 Z" fill="#a066bf"/>
<path d="M466.500 190.500 L463 187.500 V189.500 H458 V191.500 H463 V193.500 Z" fill="#3f7cc4"/>
</svg>
<svg id="ink" viewBox="0 0 1440 900" width="1440" height="900"><g fill="none" stroke="#ed1c24" stroke-width="1" stroke-linejoin="round" stroke-linecap="round" shape-rendering="crispEdges">
<polyline points="0,77 3.3,70 7,68 10,62 12.5,56 12.5,35 14,33 20,30 30,26 40,23 55,20 64,18.5 69,17.5 140,17.5 156.7,19.5 261.7,19.5 273,22 480,22 493,22.7 526.7,30 570,30.7 576.7,32.7 720,32.7 733,35 766.7,41.7 773,42.5 963,42.5 992,48.4 1010,48.4 1025.6,52.4 1079,52.4 1101.5,57.4 1236.7,57.4 1253,61 1280,65.7 1296.7,75 1313,83.3 1330,90 1340,95 1343,100 1343,113.3 1339,133.3 1326.7,143.3 1313,146 1293,148.3 1193,149.3 1135,149.7 1118.6,152.8 1113,154.6 954.7,154.5 941,150.2 919.7,149.2 910,146.7 896,144.4 844,144.4 828,149.6 809,157.4 792,165 783,168.3 766.7,173.3 740,173.3 713,168.3 700,165.2 680,161.7 635,161.3 620,158.4 600,155.8 590,154.5 580,151.5 570,151.2 560,152.5 545,154.5 541.5,156.4 515,154.5 500,152.5 490,150.8 456,150.3 447,147.3 418,147 405,143.6 377,143.6 368,148.5 345,149.7 325,150.8 312,153.4 275,153.3 270,152.5 245,152.5 240,153.3 145,153.3 140,152 120,150.8 110,150 85,149.3 75,145.8 60,145.4 35,146 20,142 13,137 10,131.5 5,123.8 0,116" />
<polyline points="5.5,14 4,17 2.5,25 1.5,35 0.5,46 0,48" />
<polyline points="8.5,26 8.5,35 7,45 5,55 2.5,65 0.5,72 0,78" />
<polyline points="0,96 5,102.7 10,105 20,107 30,108.2 31.5,107 30.5,102" />
<polyline points="10,131.5 16,132.7 30,133.8 42,135.4 50,138 80,142.7 88,145.4 100,145 115,145.8 140,150.8 145,153.3" />
<polyline points="0,175 1,173.5 2.5,172 6,172 10,172.5 14,174 17,176 20,179 22,183 23,186 23.5,190 23.5,210 22,213 21.5,218 20.5,222 20,235 19.5,243 19,255 18.5,280 19.5,282 22,286 24,295 25.5,300 25.5,320 24.5,325 23,330 23.5,342 25,346 26.5,350 26.5,377 25.5,380 25,392 24.5,420 24.5,475 23.5,477 23,481 22.5,510 22.5,564 21.5,566 21.5,580 20.5,584 19.5,590 18.5,595 18,612 18.5,618 17,622 15,625 13,628 11.5,628.5" />
<polyline points="21,186 21.5,200 21.5,212 20.5,226 19.5,232 19,240 19.5,250 19.5,282 19.5,310 20,322 21,327 22.5,332 22.5,380 21,383 20,388 19.5,392 19,398 17.5,400 17.5,436 18.5,438 18.5,452 19.5,455 20.5,458 20.5,477 19.5,480 18.5,485 17.5,492 16.5,494 16.5,510 17.5,515 18.5,525 19.5,530 20.5,532 20.5,546 19.5,548 18.5,552 17,554 16.5,558 16,564 15.5,565 15.5,584 16.5,587 17.5,592 17.5,600 16.5,602 16.5,612 17.5,614 17.5,632 14,631 7,630 5.5,628 4.5,622 3,618 1.5,614 0,613" />
<polyline points="3.5,173 3,180 2.5,220 2.5,279 1.5,283 0.5,290 0,291" />
<polyline points="0,367 1,370 1.5,395 3,400 3.5,420 3.5,518 2.5,520 2.5,560 1.5,563 0.5,567 0,568" />
<path d="M541.5 154V163" stroke-width="2"/>
</g>
<g fill="none" stroke="#7f7f7f" stroke-width="3.1" stroke-linejoin="round" stroke-linecap="round">
<polyline points="69.6,238.3 69.6,226.9 71,217.5 72,213 76.2,211.2 90.8,208 103.3,202.5 115.8,197.7 122,197.3 132.5,192.5 145,189.4 155.4,185.8 165.8,183.7 178.3,182 186.7,180 199,178 215.8,177.5 228.3,175.4 240.8,173.3 253.3,169.6 263.7,168 274,166 320,166 436,166 441.6,168.3 460.5,168.9 470,171.7 488.8,173.6 496.4,175.1 540,175 546.7,176.7 680,176.7 690,178.3 796.7,178.3 813,180.7 833,184 856.7,185 886.7,185 900,189 1015,189 1023,192.3 1166.7,192.3 1176.7,194 1246.7,193.5 1260,196.7 1276.7,200.7 1290,208.3 1296.7,218.3 1303.3,230 1311.7,243.3 1318.3,260 1326.7,280 1335,296.7 1343.3,320 1350,343.3 1355,366.7 1359,386.7 1360.5,403.3 1360.5,490 1358,500 1358,553 1355,570 1346.7,580 1330,590 1310,595 1280,600 1266.7,604 1233,605 1180,605 1153,610.7 1140,618.3 1120,628 1104,636 1092,637.6 1080,642 1070,646.4 1010,646.4 990,644 972,641 958,637 940,635.5 926.7,633.3 920,635 899,640 890,642 796.7,642 779,639.6 761,636 747.8,637 734.4,641 714.4,647.8 703.3,651 665.6,654.4 610,655.6 593.3,655 563.3,650 530,649 510,646.7 480,646.7 463.3,650 443.3,655 413.3,656 306.7,656 266.7,646.7 253.3,645 230,636.7 210,626.7 193.3,608.3 186.7,600 173.3,576.7 163.3,553.3 153.3,523.3 146.7,496.7 142.7,476.7 143.3,447.7 110,441.7 100,438.3 93.3,433.3 80,398 78,392 75,385 71,375 68,370 66,363 63,357 59,350 57,343 55,337 53.5,332 52,325 49.5,318 47,310 44,302 43,293 40,283 38,272 36.5,265 37,244.6 39.8,230 43,221.7 49,212.3 54.4,204 63.8,197.7 71,194.6 82.5,192.5 90.8,191.5 105.4,187.3 115.8,186.3 124,184.2 253.3,184.2 261.7,186.3 286.7,186.3 293,188.5 413,188.7 426.5,192.5 436,193.8 460.5,193.8 466,197.2 471.8,200 481,202.9 498,205.7 513.4,209.5 540,210 546.7,212.3 570,215.7 576.7,217.3 920,217.3 940,215.7 983.3,215.7 1020,210.7 1036.7,208.3 1070,208.3 1110,202.7 1136.7,201.7 1160,198.3 1176.7,194 1186.7,196.7 1220,196.7 1226.7,201.7 1243.3,210 1263.3,216.7 1280,225 1293.3,233.3 1303.3,245 1311.7,258.3 1320,276.7 1326.7,296.7 1330,310 1331,323.3 1331,390 1328.3,410 1326.7,420 1326.7,463 1321.7,483 1318,506.7 1306.7,533 1300,550 1283,563 1273,573 1260,577 1220,585 1193,590.7 1140,595.7 1123,598.3 1100,604 1070,614 1056,616 1032,620 1008,625.6 980,632 960,637 940,636 920,633.3 856.7,633.3 850,631 774.4,631 765.6,633.3 752,636 734.4,637.8 687.8,637.8 659,634.4 645.6,630.7 632,629.6 613.3,630 573.3,636 546.7,640 516.7,646 503.3,645 480,644 456.7,638.3 413.3,637.3 400,634.3 320,634.3 300,630 276.7,625 253.3,621.7 233.3,618.3 216.7,611.7 193.3,606.7 180,601.7 163.3,593.3 133.3,580 110,570 86.7,560 76,553 70,550 63,545 58,540 55,536 52,530 50.5,524 49.5,516 49.5,484 47,475 45.5,468 45.5,413 46,410 48.5,405 48.5,385 51,378 52,370 53.5,365 53.5,330 54,328 56,318 56,283 54.5,278 53,265 51.5,253 51.2,239.4 54.4,230 59.6,218.5 65.8,208 71,198.8" />
</g>
</svg>
</body>
</html>
